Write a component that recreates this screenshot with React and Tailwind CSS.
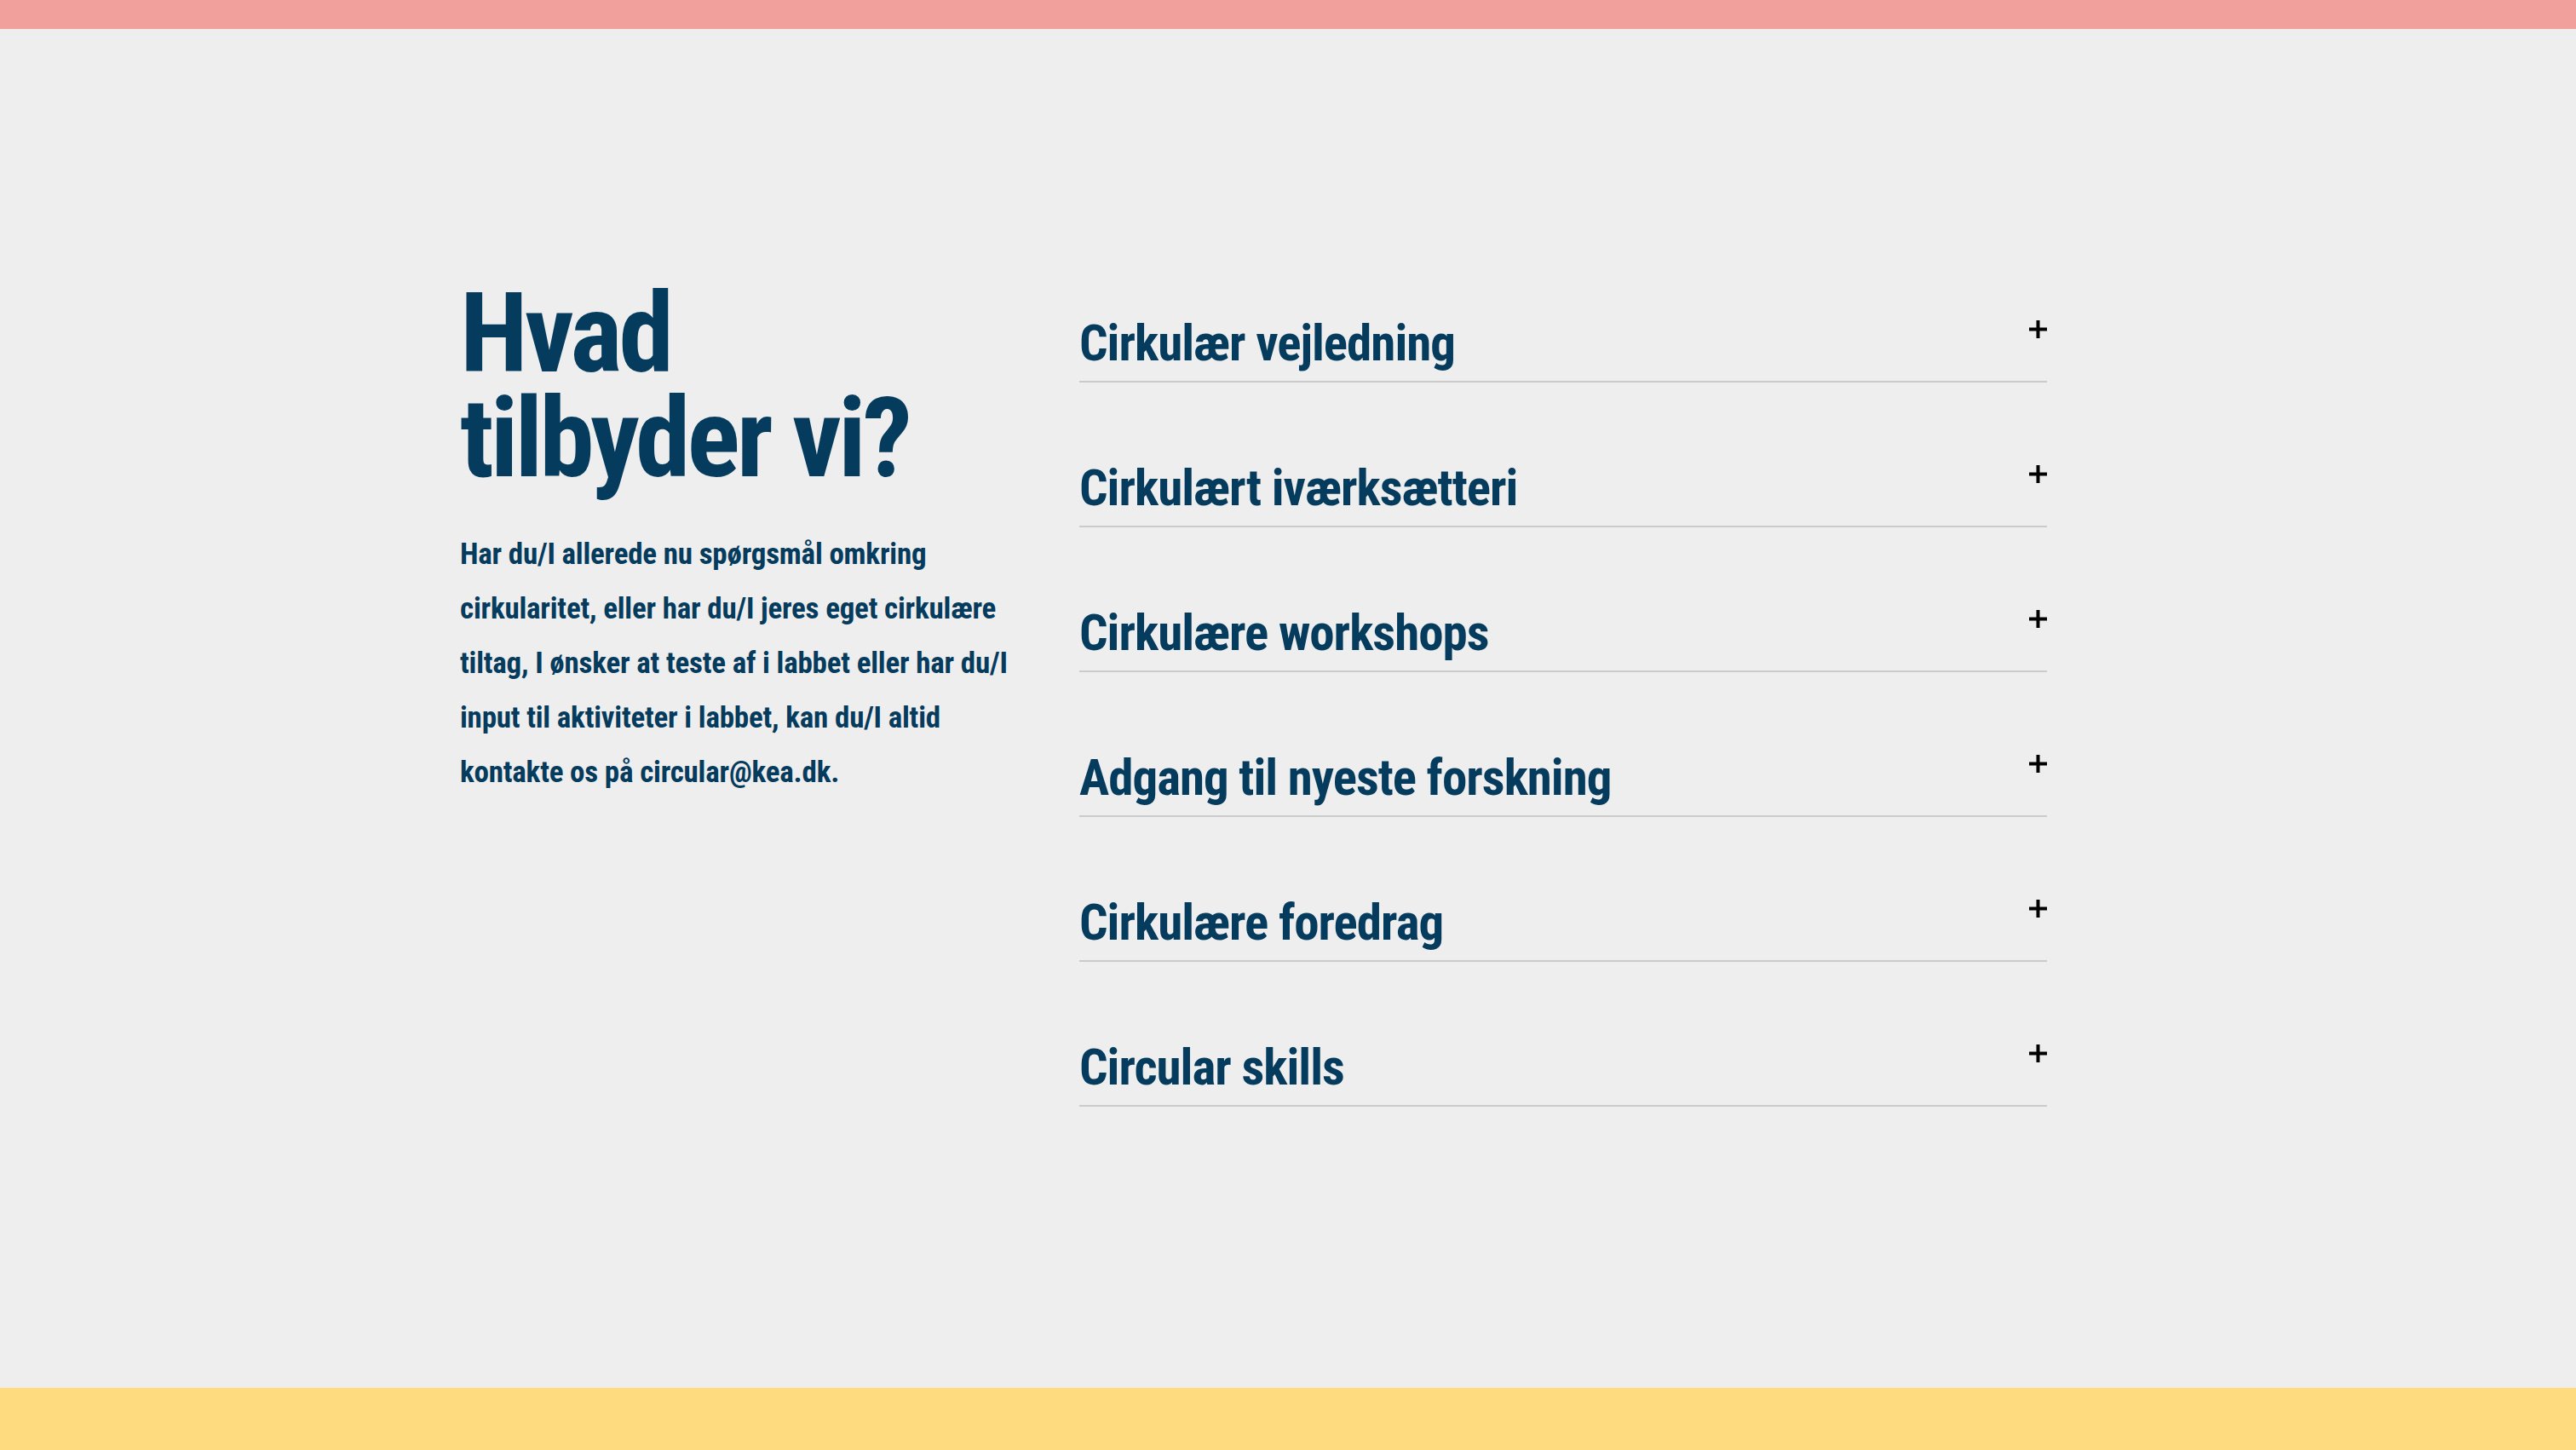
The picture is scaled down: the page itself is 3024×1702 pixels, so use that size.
const services = [
  "Cirkulær vejledning",
  "Cirkulært iværksætteri",
  "Cirkulære workshops",
  "Adgang til nyeste forskning",
  "Cirkulære foredrag",
  "Circular skills",
];

function PlusIcon() {
  return (
    <svg width="21" height="21" viewBox="0 0 21 21" className="mt-[9px] shrink-0">
      <path d="M10.5 0v21M0 10.5h21" stroke="#000" strokeWidth="4" />
    </svg>
  );
}

export default function App() {
  return (
    <div className="min-h-screen bg-[#eeeeee] font-['Roboto_Condensed',Roboto,sans-serif] text-[#053b5d]">
      {/* top strip */}
      <div className="h-[34px] bg-[#f2a09b]" />

      {/* offer section */}
      <section className="h-[1595px] pt-[245px]">
        <div className="mx-auto flex w-[1944px] gap-[67px]">
          <div className="w-[660px]">
            <h2 className="mt-[51px] text-[130px] font-bold leading-[123px] tracking-[-4px]">
              Hvad
              <br />
              tilbyder vi?
            </h2>
            <p className="mt-[43px] text-[35px] font-bold leading-[64px] tracking-[-0.2px]">
              Har du/I allerede nu spørgsmål omkring cirkularitet, eller har du/I jeres eget cirkulære
              tiltag, I ønsker at teste af i labbet eller har du/I input til aktiviteter i labbet, kan
              du/I altid kontakte os på circular@kea.dk.
            </p>
          </div>

          <ul className="w-[1136px]">
            {services.map((s) => (
              <li
                key={s}
                className="flex cursor-pointer items-start justify-between border-b-2 border-[#cbcbcb] pt-[88px] pb-[9px]"
              >
                <span className="text-[59px] font-bold leading-[71px] tracking-[-1px]">{s}</span>
                <PlusIcon />
              </li>
            ))}
          </ul>
        </div>
      </section>

      {/* bottom strip */}
      <div className="h-[73px] bg-[#ffdb80]" />
    </div>
  );
}
